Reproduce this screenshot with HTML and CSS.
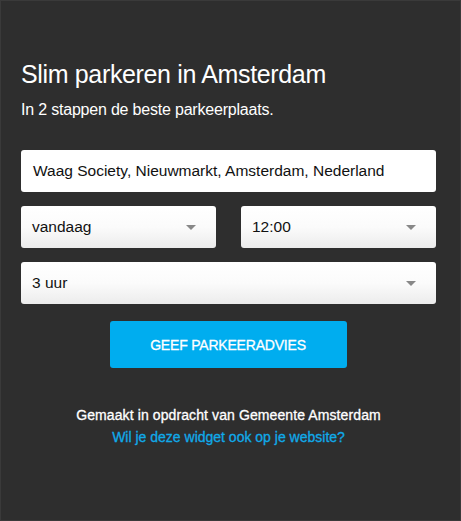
FILE: index.html
```html
<!DOCTYPE html>
<html lang="nl">
<head>
<meta charset="utf-8">
<title>Slim parkeren in Amsterdam</title>
<link rel="stylesheet" href="styles.css">
</head>
<body>
<div class="widget">
  <h1 class="title">Slim parkeren in Amsterdam</h1>
  <p class="subtitle">In 2 stappen de beste parkeerplaats.</p>
  <form class="form">
    <div class="field input">Waag Society, Nieuwmarkt, Amsterdam, Nederland</div>
    <div class="row">
      <div class="field select"><span>vandaag</span><span class="caret"></span></div>
      <div class="field select"><span>12:00</span><span class="caret"></span></div>
    </div>
    <div class="field select"><span>3 uur</span><span class="caret"></span></div>
    <div class="actions"><button type="button" class="btn">GEEF PARKEERADVIES</button></div>
  </form>
  <div class="footer">
    <p class="credit">Gemaakt in opdracht van Gemeente Amsterdam</p>
    <a class="link" href="#">Wil je deze widget ook op je website?</a>
  </div>
</div>
</body>
</html>
```
FILE: styles.css
```css
html, body {
  margin: 0;
  padding: 0;
  background: #2e2e2e;
}
body {
  font-family: "Liberation Sans", Arial, sans-serif;
  color: #fff;
}
.widget {
  width: 461px;
  height: 521px;
  box-sizing: border-box;
  border: 1px solid #3a3a3a;
  background: #2e2e2e;
  padding: 56px 24px 0 20px;
}
.title {
  margin: 0;
  font-size: 25px;
  font-weight: normal;
  line-height: 34px;
  letter-spacing: -0.35px;
}
.subtitle {
  margin: 9px 0 0;
  font-size: 16px;
  line-height: 20px;
  letter-spacing: -0.2px;
}
.form {
  margin-top: 30px;
  display: flex;
  flex-direction: column;
  gap: 14px;
}
.field {
  height: 42px;
  box-sizing: border-box;
  border-radius: 3px;
  background: #fff;
  color: #111;
  font-size: 15.5px;
  display: flex;
  align-items: center;
  padding: 0 11px;
}
.input {
  padding-left: 12px;
}
.select {
  justify-content: space-between;
  background: linear-gradient(#ffffff 0%, #fbfbfb 50%, #ececec 100%);
  padding-right: 20px;
}
.caret {
  width: 0;
  height: 0;
  border-left: 5px solid transparent;
  border-right: 5px solid transparent;
  border-top: 5px solid #888;
}
.row {
  display: grid;
  grid-template-columns: 195px 195px;
  justify-content: space-between;
}
.actions {
  display: flex;
  justify-content: center;
  padding-top: 3px;
  padding-right: 1px;
}
.btn {
  width: 237px;
  height: 47px;
  border: none;
  border-radius: 3px;
  background: #00adef;
  color: #fff;
  font-family: "Liberation Sans", Arial, sans-serif;
  font-size: 14px;
  letter-spacing: -0.2px;
  -webkit-text-stroke: 0.3px #fff;
  cursor: pointer;
}
.footer {
  margin-top: 36px;
  text-align: center;
  font-size: 14px;
  line-height: 22px;
}
.credit {
  margin: 0;
  color: #fff;
  letter-spacing: 0.1px;
  -webkit-text-stroke: 0.3px #fff;
}
.link {
  color: #10aae9;
  text-decoration: none;
  -webkit-text-stroke: 0.3px #10aae9;
}
```
